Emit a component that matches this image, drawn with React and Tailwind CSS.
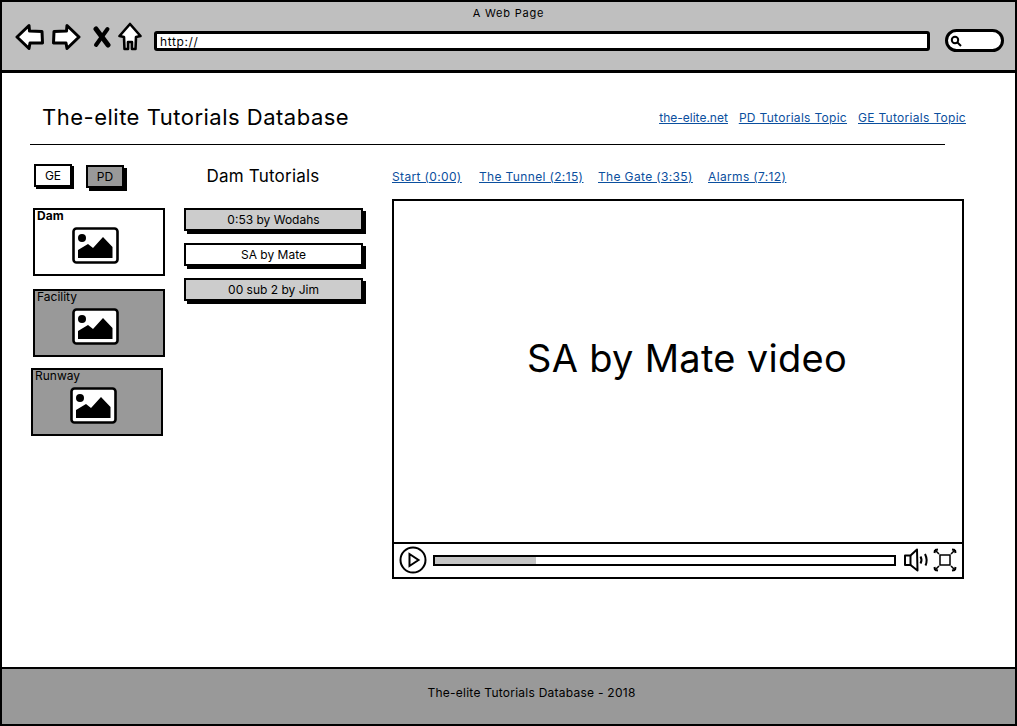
import React from "react";

const BackIcon = () => (
  <svg width="30" height="28" viewBox="0 0 30 28" fill="white" stroke="black" strokeWidth="3" strokeLinejoin="round">
    <path d="M2 14 L14 2.5 L14.5 8 L27 8.5 L27.5 20 L15 20 L14 25.5 Z" />
  </svg>
);

const ForwardIcon = () => (
  <svg width="30" height="28" viewBox="0 0 30 28" fill="white" stroke="black" strokeWidth="3" strokeLinejoin="round">
    <path d="M28 14 L16 2.5 L15.5 8 L3 8.5 L2.5 20 L15 20 L16 25.5 Z" />
  </svg>
);

const CloseIcon = () => (
  <svg width="18" height="22" viewBox="0 0 18 22" fill="none" stroke="black" strokeLinecap="round">
    <path d="M3 3 L15 19" strokeWidth="5" />
    <path d="M14.5 3 L3 19" strokeWidth="4" />
  </svg>
);

const HomeIcon = () => (
  <svg width="24" height="30" viewBox="0 0 24 30" fill="white" stroke="black" strokeWidth="2.6" strokeLinejoin="round">
    <path d="M12 2 L22.5 14 L18 15 L17.5 27 L14 27 L14 20 L10 20 L10 27 L6.5 27 L6 15 L1.5 14 Z" />
  </svg>
);

const ImageIcon = () => (
  <svg width="47" height="37" viewBox="0 0 47 37">
    <rect x="1.5" y="1.5" width="44" height="34" rx="3" fill="white" stroke="black" strokeWidth="2.6" />
    <circle cx="10" cy="11" r="4" fill="black" />
    <path d="M6 31 L6 23 L16 17 L21 21 L31 10 L40.5 20 L40.5 31 Z" fill="black" />
  </svg>
);

const PlayIcon = () => (
  <svg width="28" height="28" viewBox="0 0 28 28" fill="none" stroke="black" strokeWidth="2">
    <circle cx="14" cy="14" r="12.5" />
    <path d="M10.5 8 L19.5 14 L10.5 20 Z" />
  </svg>
);

const SpeakerIcon = () => (
  <svg width="27" height="24" viewBox="0 0 27 24" fill="white" stroke="black" strokeWidth="2" strokeLinejoin="round">
    <path d="M2 7.5 L7.5 7.5 L14 1.5 L14.5 22.5 L7.5 17 L2 17 Z" />
    <path d="M7.5 7.5 L7.5 17" />
    <path d="M17.5 8.5 Q19.5 12 17.5 15.5" fill="none" />
    <path d="M22 6 Q25 12 22.5 17.5" fill="none" />
  </svg>
);

// small arrows point out from the corners of the square, as in the reference
const FullscreenIcon = () => (
  <svg width="24" height="24" viewBox="0 0 24 24" fill="none" stroke="black" strokeWidth="1.6">
    <rect x="7" y="7" width="10" height="10" strokeWidth="1.5" />
    <path d="M2 2 L6 6" />
    <path d="M2 2 L5 1.5 M2 2 L1.5 5" strokeWidth="2" />
    <path d="M22 2 L18 6" />
    <path d="M22 2 L19 1.5 M22 2 L22.5 5" strokeWidth="2" />
    <path d="M2 22 L6 18" />
    <path d="M2 22 L5 22.5 M2 22 L1.5 19" strokeWidth="2" />
    <path d="M22 22 L18 18" />
    <path d="M22 22 L19 22.5 M22 22 L22.5 19" strokeWidth="2" />
  </svg>
);

const topLinks = [
  { label: "the-elite.net", spacing: "" },
  { label: "PD Tutorials Topic", spacing: "tracking-[0.3px]" },
  { label: "GE Tutorials Topic", spacing: "tracking-[0.3px]" },
];
const chapters = [
  { label: "Start (0:00)", width: "w-[87px]" },
  { label: "The Tunnel (2:15)", width: "w-[119px]" },
  { label: "The Gate (3:35)", width: "w-[110px]" },
  { label: "Alarms (7:12)", width: "w-[78px]" },
];
const levels = [
  { name: "Dam", box: "bg-white font-bold", offset: "" },
  { name: "Facility", box: "bg-[#999999]", offset: "" },
  { name: "Runway", box: "bg-[#999999]", offset: "-mt-[2px] -ml-[2px] mr-[2px]" },
];
const tutorials = [
  { name: "0:53 by Wodahs", active: false },
  { name: "SA by Mate", active: true },
  { name: "00 sub 2 by Jim", active: false },
];

const App = () => {
  return (
    <div className="w-[1017px] h-[726px] flex flex-col bg-white border-2 border-black text-black overflow-hidden font-['Inter',sans-serif]">
      <header className="h-[71px] shrink-0 bg-[#bfbfbf] border-b-[3px] border-black">
        <div className="text-center text-[11px] leading-[14px] pt-[4px] tracking-[0.8px]">A Web Page</div>
        <div className="flex items-center mt-[2px] pl-[13px]">
          <div className="flex items-center mb-[7px]">
            <BackIcon />
            <div className="ml-[6px]"><ForwardIcon /></div>
            <div className="ml-[12px]"><CloseIcon /></div>
            <div className="ml-[7px]"><HomeIcon /></div>
          </div>
          <div className="ml-[12px] w-[776px] h-[20px] bg-white border-[3px] border-black rounded-[3px] text-[12px] leading-[15px] tracking-[0.6px] pl-[3px]">http://</div>
          <div className="ml-[15px] w-[59px] h-[23px] bg-white border-[3px] border-black rounded-full flex items-center pl-[2px]">
            <svg width="12" height="12" viewBox="0 0 12 12" fill="none" stroke="black" strokeWidth="2">
              <circle cx="5" cy="5" r="3.2" />
              <path d="M7.5 7.5 L11 11" />
            </svg>
          </div>
        </div>
      </header>

      <main className="flex-1 min-h-0">
        <div className="flex items-center justify-between pl-[40px] pr-[49px] pt-[30px] h-[58px]">
          <h1 className="text-[22px] leading-[28px] tracking-[0.5px]">The-elite Tutorials Database</h1>
          <nav className="flex gap-[11px] mt-[1px] text-[12px] leading-[16px] text-[#0b4f9e] underline">
            {topLinks.map((link) => (
              <a key={link.label} className={link.spacing}>{link.label}</a>
            ))}
          </nav>
        </div>
        <div className="ml-[28px] mt-[13px] w-[915px] h-[1px] bg-black" />

        <div className="flex mt-[19px]">
          <aside className="w-[132px] ml-[31px] shrink-0">
            <div className="flex gap-[14px] pl-[1px]">
              <div className="w-[38px] h-[23px] bg-white border-2 border-black shadow-[2px_2px_0_#000] text-center text-[12px] leading-[19px]">GE</div>
              <div className="w-[38px] h-[23px] mt-[1px] bg-[#999999] border-2 border-black shadow-[3px_3px_0_#000] text-center text-[12px] leading-[20px]">PD</div>
            </div>
            <div className="flex flex-col gap-[13px] mt-[20px]">
              {levels.map((level) => (
                <div key={level.name} className={`h-[68px] border-2 border-black px-[2px] ${level.box} ${level.offset}`}>
                  <div className="text-[12px] leading-[12px]">{level.name}</div>
                  <div className="flex justify-center mt-[5px] pr-[8px]"><ImageIcon /></div>
                </div>
              ))}
            </div>
          </aside>

          <section className="w-[180px] ml-[19px] shrink-0">
            <h2 className="text-center text-[17px] leading-[24px] tracking-[0.2px] pr-[22px] h-[23px]">Dam Tutorials</h2>
            <div className="flex flex-col gap-[12px] mt-[21px] w-[179px]">
              {tutorials.map((item) => (
                <div
                  key={item.name}
                  className={`h-[23px] border-2 border-black shadow-[3px_3px_0_#000] text-center text-[12px] leading-[19px] ${item.active ? "bg-white" : "bg-[#cccccc]"}`}
                >
                  {item.name}
                </div>
              ))}
            </div>
          </section>

          <section className="w-[572px] ml-[28px] shrink-0">
            <div className="flex h-[23px] mt-[1px] items-center whitespace-nowrap text-[12px] tracking-[0.35px] text-[#0b4f9e] underline">
              {chapters.map((chapter) => (
                <a key={chapter.label} className={chapter.width}>{chapter.label}</a>
              ))}
            </div>
            <div className="h-[380px] mt-[11px] border-2 border-black flex flex-col">
              <div className="flex-1 flex items-center justify-center pb-[26px] pl-[18px] text-[38px] tracking-[0.3px]">SA by Mate video</div>
              <div className="h-[35px] shrink-0 border-t-2 border-black flex items-center pl-[5px] pb-[1px]">
                <PlayIcon />
                <div className="ml-[6px] w-[463px] h-[11px] border-2 border-black bg-white">
                  <div className="w-[22%] h-full bg-[#c4c4c4]" />
                </div>
                <div className="ml-[7px]"><SpeakerIcon /></div>
                <div className="ml-[3px]"><FullscreenIcon /></div>
              </div>
            </div>
          </section>
        </div>
      </main>

      <footer className="h-[57px] shrink-0 bg-[#999999] border-t-2 border-black flex items-center justify-center pl-[46px] pb-[8px] text-[12px] tracking-[0.25px]">
        The-elite Tutorials Database - 2018
      </footer>
    </div>
  );
};

export default App;
